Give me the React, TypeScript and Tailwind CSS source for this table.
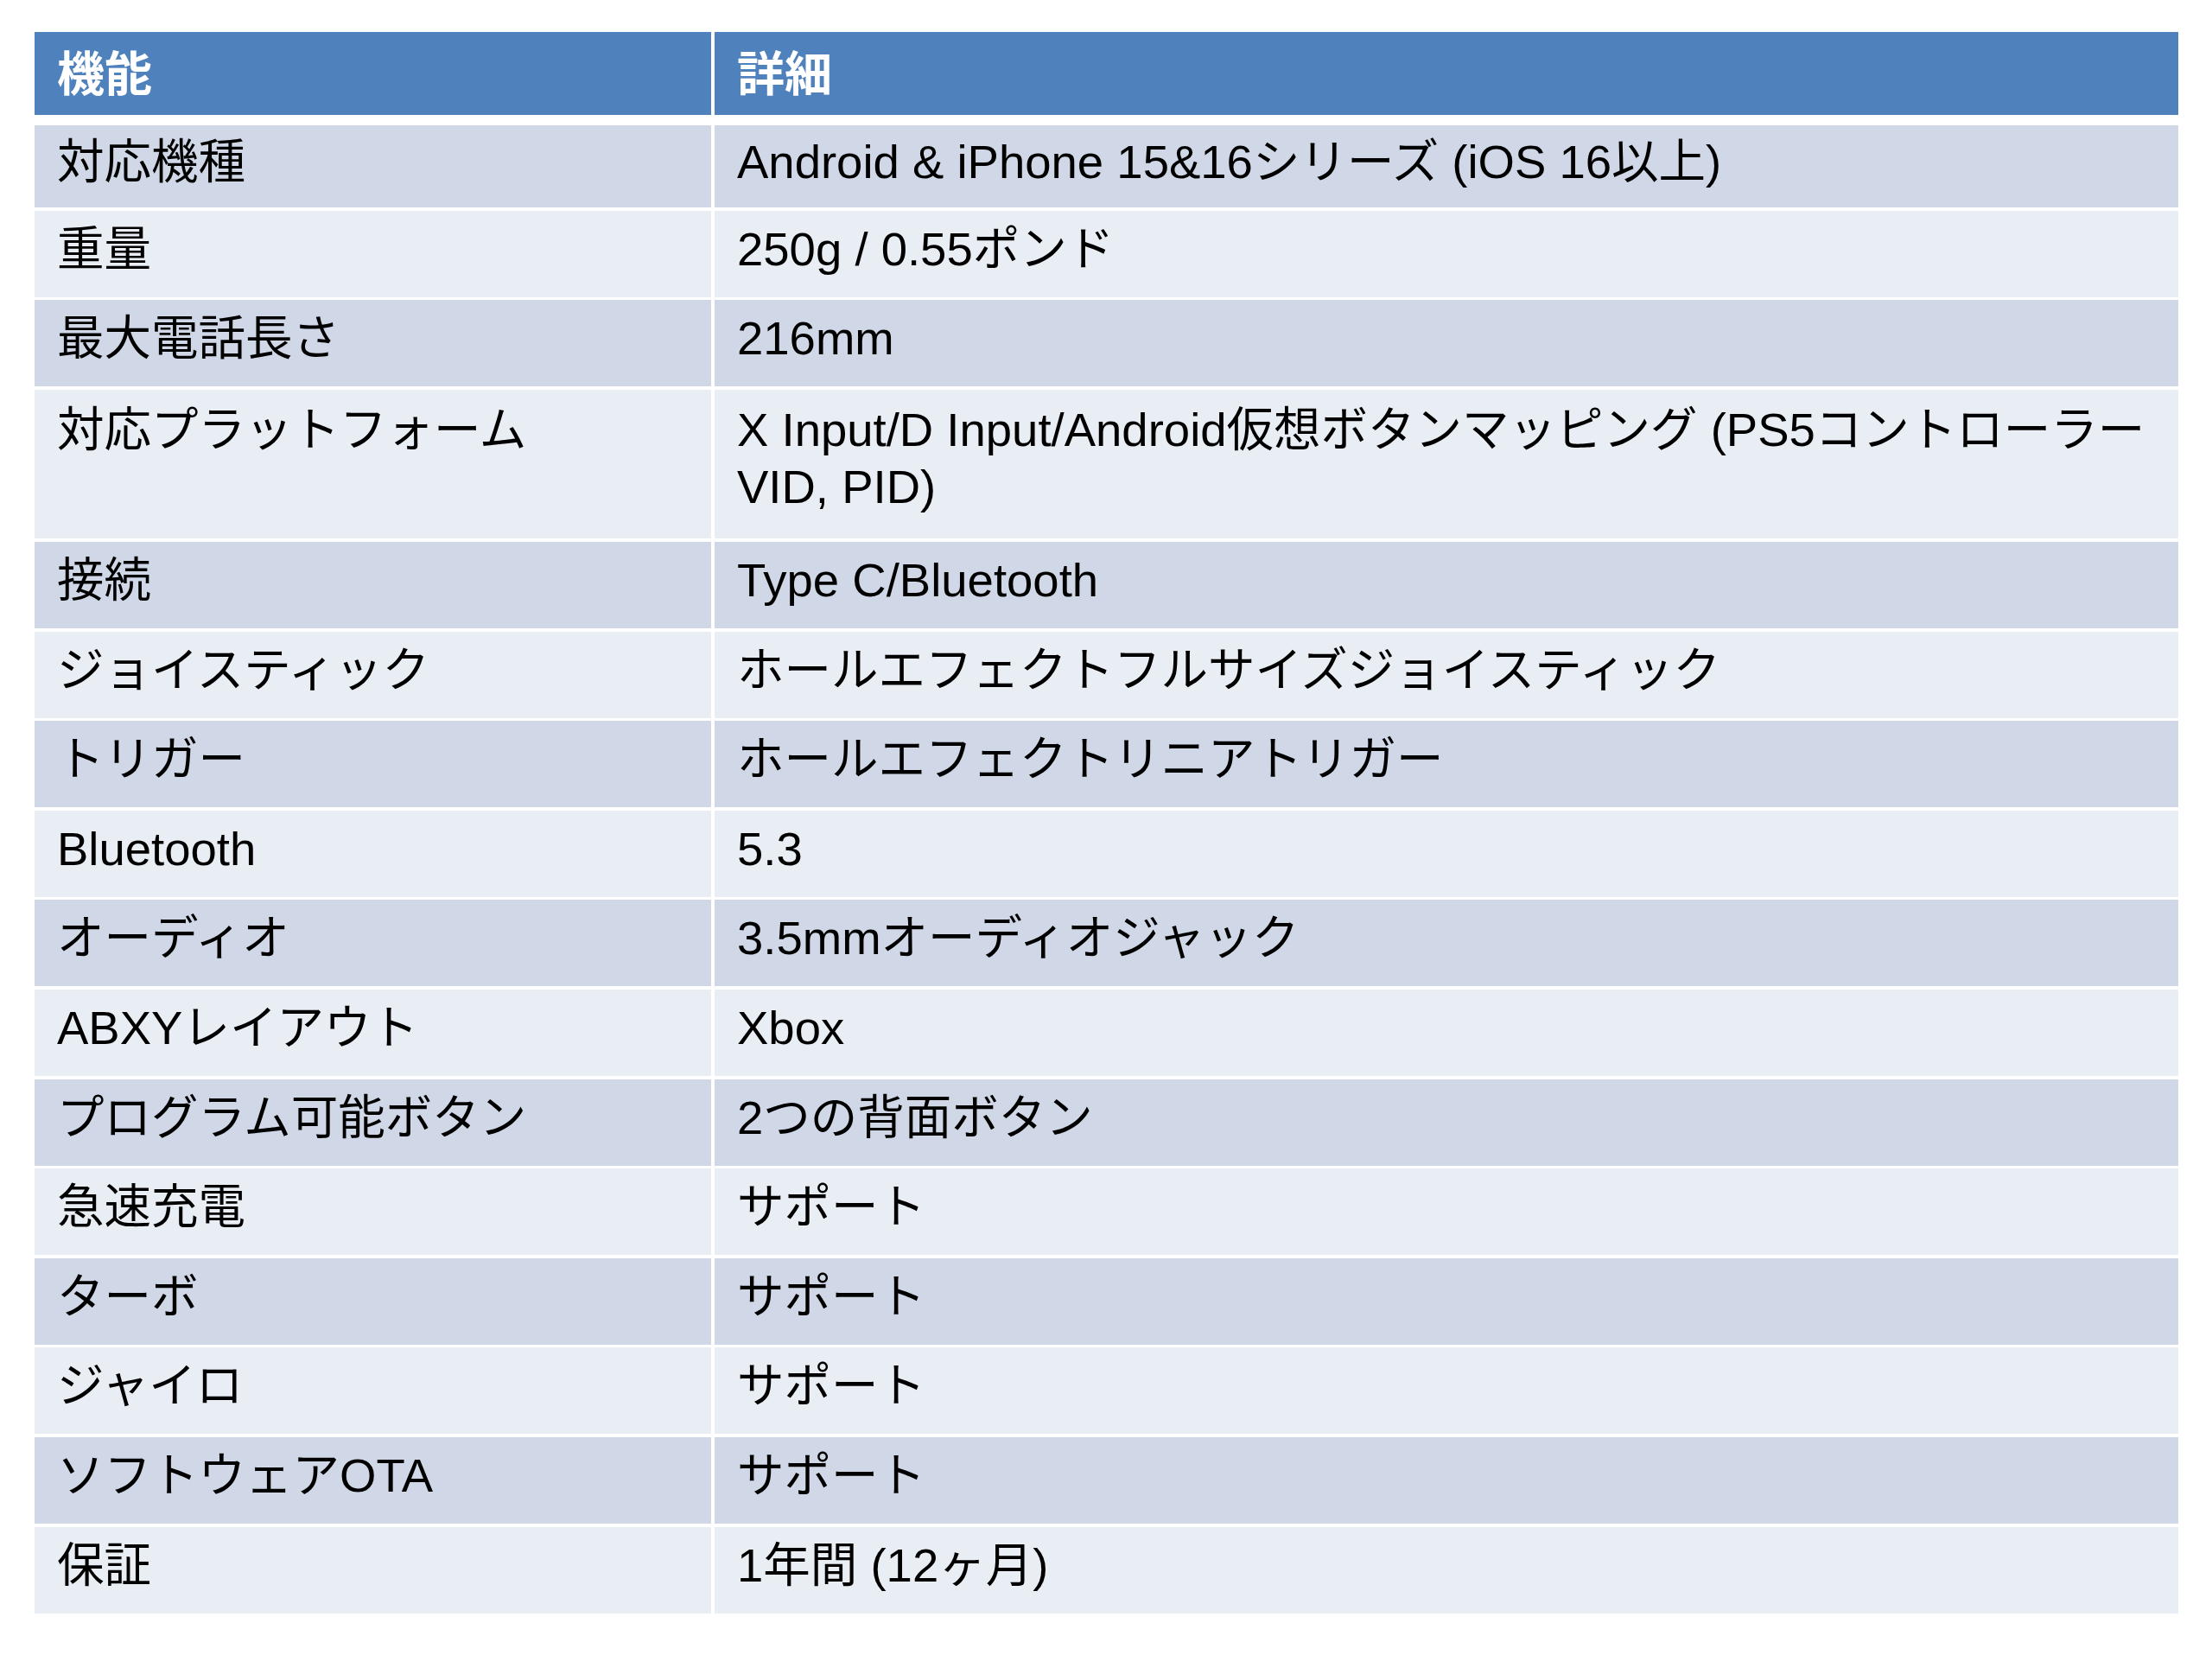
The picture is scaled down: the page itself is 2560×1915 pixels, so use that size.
import React from "react";

const rows: { k: string; v: React.ReactNode; tall?: boolean }[] = [
  { k: "対応機種", v: "Android & iPhone 15&16シリーズ (iOS 16以上)" },
  { k: "重量", v: "250g / 0.55ポンド" },
  { k: "最大電話長さ", v: "216mm" },
  {
    k: "対応プラットフォーム",
    v: (
      <>
        <span className="whitespace-nowrap">X Input/D Input/Android仮想ボタンマッピング (PS5コントローラー</span>
        <br />
        VID, PID)
      </>
    ),
    tall: true,
  },
  { k: "接続", v: "Type C/Bluetooth" },
  { k: "ジョイスティック", v: "ホールエフェクトフルサイズジョイスティック" },
  { k: "トリガー", v: "ホールエフェクトリニアトリガー" },
  { k: "Bluetooth", v: "5.3" },
  { k: "オーディオ", v: "3.5mmオーディオジャック" },
  { k: "ABXYレイアウト", v: "Xbox" },
  { k: "プログラム可能ボタン", v: "2つの背面ボタン" },
  { k: "急速充電", v: "サポート" },
  { k: "ターボ", v: "サポート" },
  { k: "ジャイロ", v: "サポート" },
  { k: "ソフトウェアOTA", v: "サポート" },
  { k: "保証", v: "1年間 (12ヶ月)" },
];

export default function App() {
  return (
    <div
      className="w-[2560px] h-[1915px] bg-white pt-[37px] pl-[40px] text-black"
      style={{ fontFamily: '"Liberation Sans", "Noto Sans CJK JP", sans-serif' }}
    >
      <div className="w-[2481px] flex flex-col">
        <div className="flex gap-[4px] h-[96px] mb-[12px]">
          <div className="w-[783px] bg-[#4f81bd] flex items-center pl-[26px] pt-[2px] text-white font-bold text-[55px] leading-[66px]">
            機能
          </div>
          <div className="flex-1 bg-[#4f81bd] flex items-center pl-[26px] pt-[2px] text-white font-bold text-[55px] leading-[66px]">
            詳細
          </div>
        </div>
        <div className="flex flex-col gap-[3.6px]">
          {rows.map((r, i) => {
            const bg = i % 2 === 0 ? "bg-[#d0d8e8]" : "bg-[#e9edf4]";
            const h = i === 0 ? "h-[95px]" : r.tall ? "h-[172.7px]" : "h-[100px]";
            const align = r.tall ? "items-start pt-[14px]" : "items-center pb-[10px]";
            return (
              <div key={i} className={`flex gap-[4px] ${h}`}>
                <div className={`w-[783px] ${bg} flex ${align} pl-[26px] text-[54.5px] leading-[66px]`}>
                  {r.k}
                </div>
                <div className={`flex-1 ${bg} flex ${align} pl-[26px] text-[54.5px] leading-[66px]`}>
                  <div>{r.v}</div>
                </div>
              </div>
            );
          })}
        </div>
      </div>
    </div>
  );
}
